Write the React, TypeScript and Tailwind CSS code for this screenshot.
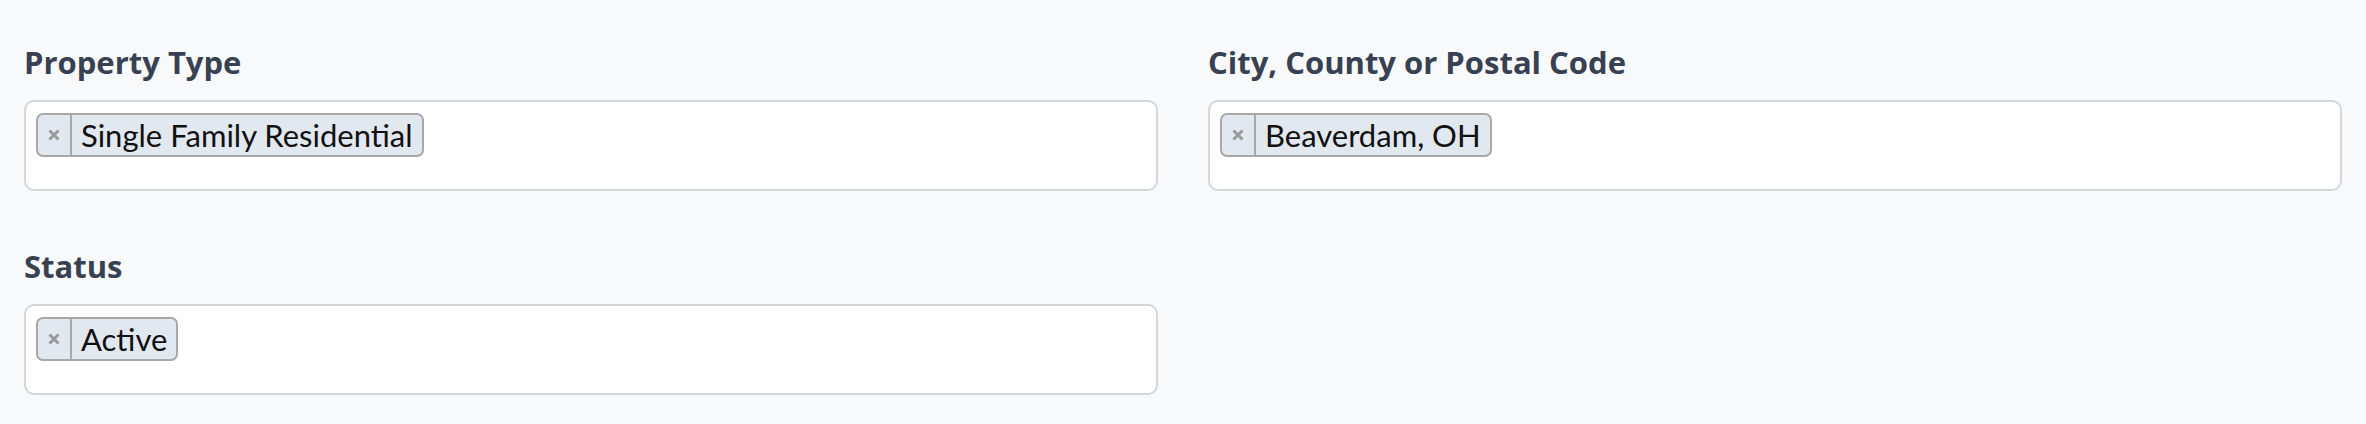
type Field = {
  label: string
  values: string[]
}

const fields: Field[] = [
  { label: "Property Type", values: ["Single Family Residential"] },
  { label: "City, County or Postal Code", values: ["Beaverdam, OH"] },
  { label: "Status", values: ["Active"] },
]

function RemoveIcon() {
  return (
    <svg width="12" height="12" viewBox="0 0 12 12" className="text-[#9a9a9a]">
      <path d="M1.5 1.5L10.5 10.5M10.5 1.5L1.5 10.5" stroke="currentColor" strokeWidth="3" />
    </svg>
  )
}

function Tag({ text }: { text: string }) {
  return (
    <span className="inline-flex h-[44px] items-stretch rounded-[7px] border-2 border-[#a8a8a8] bg-[#e2e8f0]">
      <span className="flex w-[34px] items-center justify-center border-r-2 border-[#a8a8a8]">
        <RemoveIcon />
      </span>
      <span className="flex items-center px-[9px] pt-[1px] font-['Lato',sans-serif] text-[31px] leading-none text-[#111111]">
        {text}
      </span>
    </span>
  )
}

export default function App() {
  return (
    <div className="min-h-[424px] bg-[#f8f9fb] px-6 pt-[44px] font-['Open_Sans',sans-serif]">
      <div className="grid grid-cols-2 gap-x-[50px] gap-y-[57px]">
        {fields.map((f) => (
          <div key={f.label} className="flex flex-col">
            <label className="mb-[20px] text-[31px] font-bold leading-[36px] text-[#374151]">{f.label}</label>
            <div className="h-[91px] rounded-[10px] border-2 border-[#d4d6dc] bg-white px-[10px] pt-[11px]">
              <div className="flex flex-wrap gap-2">
                {f.values.map((v) => (
                  <Tag key={v} text={v} />
                ))}
              </div>
            </div>
          </div>
        ))}
      </div>
    </div>
  )
}
